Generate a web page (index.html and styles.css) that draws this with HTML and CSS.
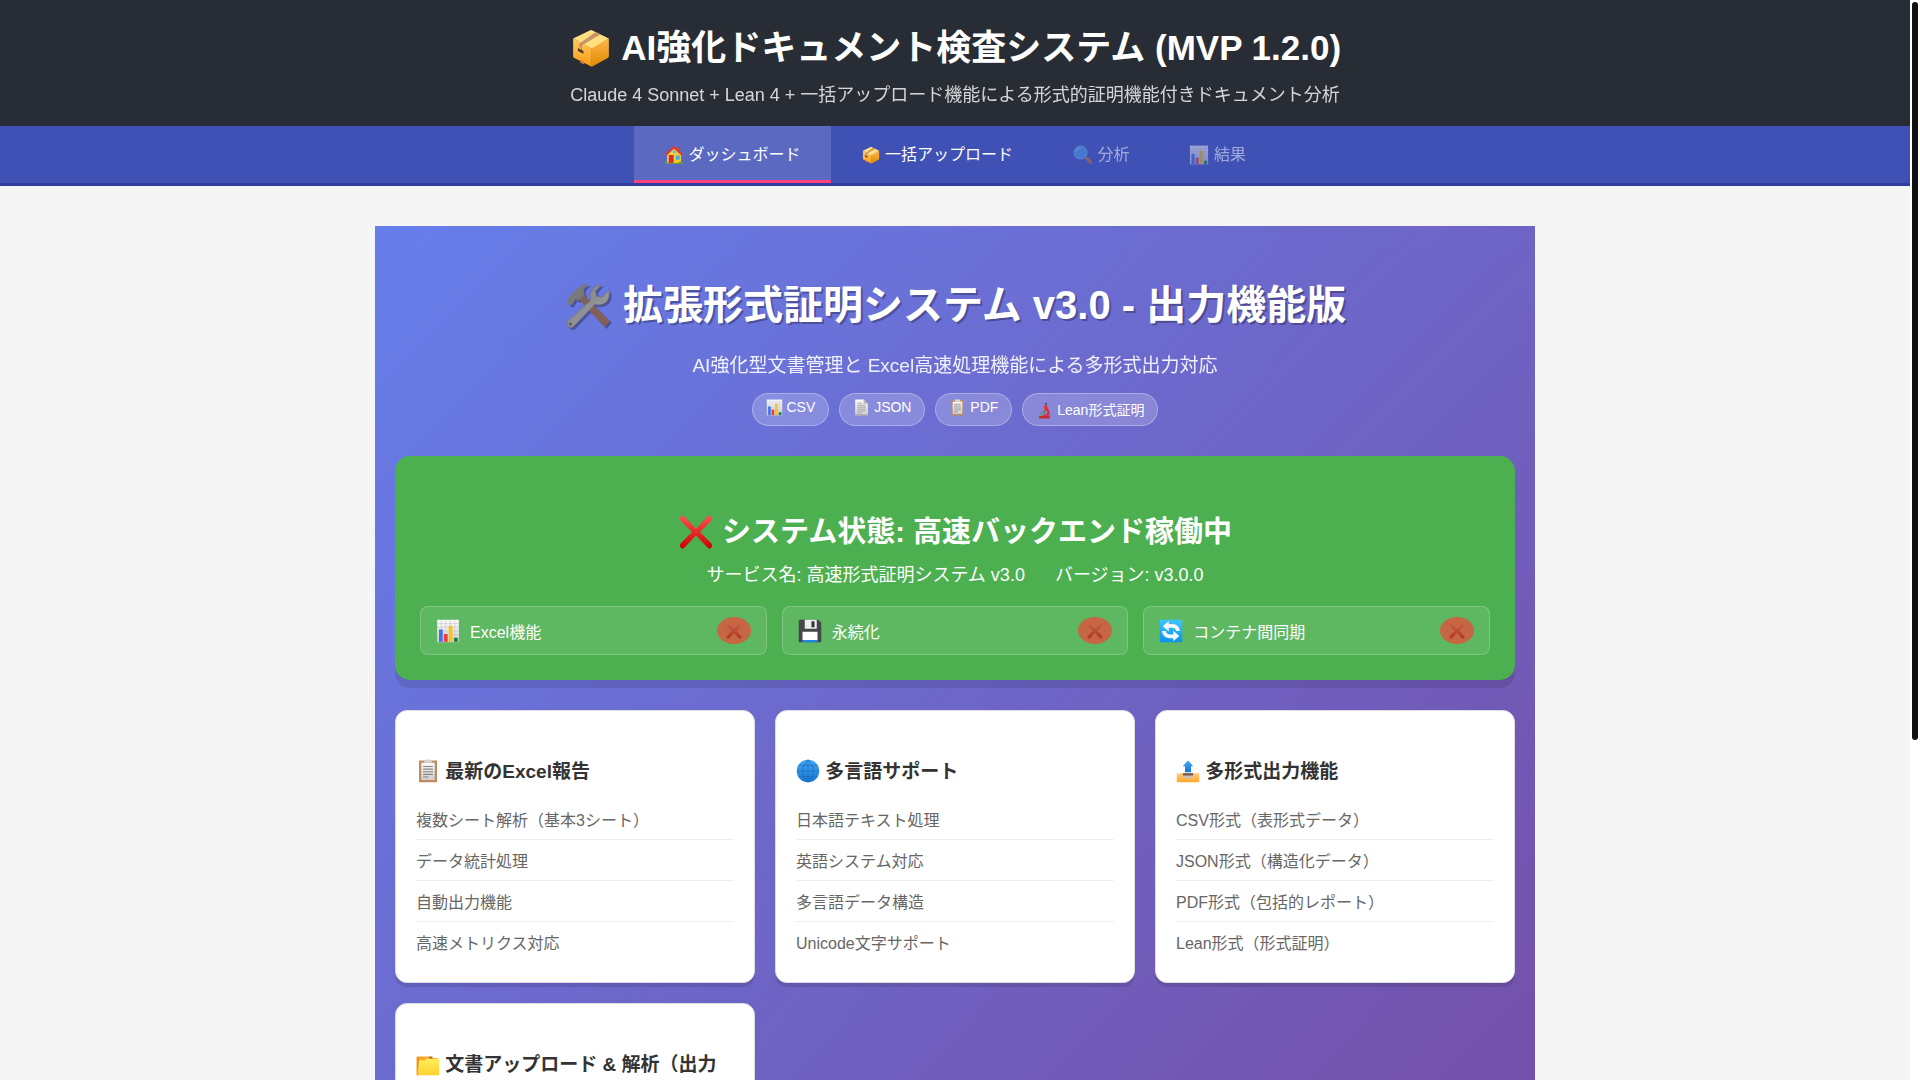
FILE: index.html
```html
<!DOCTYPE html>
<html lang="ja">
<head>
<meta charset="utf-8">
<title>AI強化ドキュメント検査システム</title>
<link rel="stylesheet" href="styles.css">
</head>
<body>
<svg class="sprite" aria-hidden="true">
  <defs>
    <linearGradient id="g-box-side" x1="0" y1="0" x2="0" y2="1"><stop offset="0" stop-color="#ffb74d"/><stop offset="1" stop-color="#e08a00"/></linearGradient>
    <linearGradient id="g-box-front" x1="0" y1="0" x2="0" y2="1"><stop offset="0" stop-color="#ffca5c"/><stop offset="1" stop-color="#fb9a17"/></linearGradient>
    <linearGradient id="g-metal" x1="0" y1="0" x2="1" y2="1"><stop offset="0" stop-color="#7c7c80"/><stop offset="1" stop-color="#a5a5a5"/></linearGradient>
    <linearGradient id="g-paper" x1="0" y1="0" x2="0" y2="1"><stop offset="0" stop-color="#fafafa"/><stop offset="1" stop-color="#cfcfcf"/></linearGradient>
    <linearGradient id="g-red" x1="0" y1="0" x2="0" y2="1"><stop offset="0" stop-color="#ff5252"/><stop offset="1" stop-color="#d00000"/></linearGradient>
    <linearGradient id="g-red-dim" x1="0" y1="0" x2="0" y2="1"><stop offset="0" stop-color="#c65f49"/><stop offset="1" stop-color="#aa3920"/></linearGradient>
    <linearGradient id="g-blue" x1="0" y1="0" x2="0" y2="1"><stop offset="0" stop-color="#42a5f5"/><stop offset="1" stop-color="#1976d2"/></linearGradient>
    <linearGradient id="g-cyan" x1="0" y1="0" x2="0" y2="1"><stop offset="0" stop-color="#40c4ff"/><stop offset="1" stop-color="#0a93ea"/></linearGradient>
    <linearGradient id="g-folder" x1="0" y1="0" x2="0" y2="1"><stop offset="0" stop-color="#ffee58"/><stop offset="1" stop-color="#fdd131"/></linearGradient>
    <linearGradient id="g-tray" x1="0" y1="0" x2="0" y2="1"><stop offset="0" stop-color="#ffcc80"/><stop offset="1" stop-color="#ffa82b"/></linearGradient>
  </defs>
  <symbol id="package" viewBox="0 0 32 32">
    <path d="M3 9 16.500 16 16.500 29.500Q16 29.500 15.500 29L3.500 23Q3 22.500 3 22z" fill="url(#g-box-front)"/>
    <path d="M29 9v13q0 .6-.5 1L17 29.500h-.8V16z" fill="url(#g-box-side)"/>
    <path d="M3 9 15.500 3q.6-.2 1.200 0L29 9 16.500 16.300z" fill="#ffdf7e"/>
    <path d="M19.500 4.300 23 6 9.500 14v3.500L7.500 15v-2.200z" fill="#c8936c"/>
    <path d="m6.500 16 4 2.200v2l-4-2z" fill="#4e342e"/><path d="M8 24.500l3 1.500v2l-3-1.500z" fill="#c77d3a"/>
  </symbol>
  <symbol id="house" viewBox="0 0 32 32">
    <path d="M5 14 16 4l11 10v15H5z" fill="#fdd835"/><path d="M16 4l11 10v15h-9z" fill="#ffc928"/>
    <path d="M22 3h3.500v8L22 8z" fill="#d84315"/>
    <path d="M16 1 2 14.500 4 17 16 6l12 11 2-2.500z" fill="#e53935"/>
    <path d="M7.500 16h8v13h-8z" fill="#d32f2f"/><path d="M19 17h6v6.500h-6z" fill="#29b6f6"/><circle cx="16" cy="11" r="2.500" fill="#4fc3f7"/>
    <path d="M1.500 28.500q2-4 5 0t6 0h11q3-4 7 0V30.500h-29z" fill="#689f38"/>
  </symbol>
  <symbol id="search" viewBox="0 0 32 32">
    <path d="m20 20 3-1.500 7 7.500q1 2-.5 3.500-2 1-3.500 0L19.500 22z" fill="#d86b1f"/>
    <circle cx="12" cy="12" r="10.500" fill="#4fa0ee" stroke="#80b4df" stroke-width="1.500"/><path d="M5 11q1-6 7-6.500" fill="none" stroke="#b3d9fa" stroke-width="1.500"/>
  </symbol>
  <symbol id="chart" viewBox="0 0 32 32">
    <path d="M1.500 1h29v30h-29z" fill="url(#g-paper)"/>
    <path d="M1.500 6h29M1.500 11h29M1.500 16h29M1.500 21h29M1.500 26h29M7 1v30M13 1v30M19 1v30M25 1v30" stroke="#c4c4c4" stroke-width=".7"/>
    <path d="M4 14h5v16.500H4z" fill="#3f75e8"/><path d="M10.500 20h5v10.500h-5z" fill="#ee4036"/><path d="M17 9h5v21.500h-5z" fill="#fbc31d"/><path d="M24 25h5v5.500h-5z" fill="#108643"/>
  </symbol>
  <symbol id="tools" viewBox="0 0 32 32">
    <path d="m9.500 11 3.500-2.500L30.500 26l-3.500 4z" fill="#806057"/>
    <path d="M2.500 11 8 5q4-4 9-3.500-4 2-4 5l1 2-4.500 4-2-1-1 2-2 2.500L2 14z" fill="#78787d"/>
    <path d="M2.500 26 18 12q-1.500-5 2-8.500 2-1.700 5-1.700l-4 4.200.8 3.500 3.500.8 4.500-4.800q1.300 5-1.800 8-3 2.500-7.500 1.500L6 30q-2 1-3.500-.5-1.300-1.700 0-3.500z" fill="url(#g-metal)" stroke="#707072" stroke-width=".4"/>
    <circle cx="4.300" cy="28" r="1" fill="#585860"/>
  </symbol>
  <symbol id="page" viewBox="0 0 32 32">
    <path d="M4 1h16l8 8v22H4z" fill="url(#g-paper)"/><path d="M20 1v8h8z" fill="#b5b5b5"/>
    <path d="M8 8h9M8 12h16M8 15.500h16M8 19h16M8 22.500h16M8 26h8" stroke="#929292" stroke-width="1.400"/><path d="M4 29h24v2H4z" fill="#9e9e9e"/>
  </symbol>
  <symbol id="clipboard" viewBox="0 0 32 32">
    <path d="M4 2h24v29H4z" fill="#bd8c62"/><path d="M7 5h18v23H7z" fill="url(#g-paper)"/>
    <path d="M11 1h3q2-1.500 4 0h3v4H11z" fill="#d5d5d5"/>
    <path d="M9.500 10h13M9.500 13.500h13M9.500 17h13M9.500 20.500h13M9.500 24h7" stroke="#858585" stroke-width="1.400"/>
  </symbol>
  <symbol id="microscope" viewBox="0 0 32 32">
    <path d="M16.500 2 20 1l1 4-3 1z" fill="#455a64"/><path d="M14 8l6-3 2 6 2 4q3 5 1 11H9v-3h12q1-5-2-8z" fill="#d32f2f"/>
    <path d="M15 9l4-1 2 7-5 4z" fill="#e53935"/><path d="m7 21 9-5 2 4-10 4z" fill="#607d8b"/><circle cx="10" cy="23" r="4" fill="#78909c"/>
    <path d="M6 26.500h20V31H6z" fill="#c62828"/>
  </symbol>
  <symbol id="cross" viewBox="0 0 32 32">
    <path d="M2.500 2.200q1.800-1.700 3.500.3L16 13 26 2.500q1.700-2 3.500-.3 1.700 1.700.2 3.700L19.500 16l10.200 10.300q1.500 1.800-.2 3.600-1.800 1.700-3.500-.3L16 19 6 29.600q-1.700 2-3.500.3-1.700-1.800-.2-3.600L12.500 16 2.300 5.900q-1.500-2 .2-3.700z"/>
  </symbol>
  <symbol id="floppy" viewBox="0 0 32 32">
    <path d="M3 1h24l4 4v25q0 1-1 1H2q-1 0-1-1V3q0-2 2-2z" fill="#46474a"/>
    <path d="M9 1h16v12H9z" fill="#eee"/><path d="M18 3h4v8h-4z" fill="#333"/>
    <path d="M6 17h20v11H6z" fill="#fff"/><path d="M6 28h20v3H6z" fill="#1e88e5"/>
  </symbol>
  <symbol id="sync" viewBox="0 0 32 32">
    <path d="M1 1h30v30H1z" fill="url(#g-cyan)"/>
    <path d="M5 9.500 13 2.500v4h5q9 .5 10 9.500h-5q-1-4.500-6-4.500h-4v5z" fill="#f3f7fa"/>
    <path d="M27 22.500 19 29.500v-4h-5Q5 25 4 16h5q1 4.500 6 4.500h4v-5z" fill="#f3f7fa"/>
  </symbol>
  <symbol id="globe" viewBox="0 0 32 32">
    <circle cx="16" cy="16" r="15" fill="url(#g-blue)"/>
    <path d="M1.500 16h29M3.500 8.500h25M3.500 23.500h25M16 1v30" stroke="#1768b8" stroke-width=".8"/><path d="M16 1Q1 16 16 31Q31 16 16 1" fill="none" stroke="#1768b8" stroke-width=".9"/>
  </symbol>
  <symbol id="outbox" viewBox="0 0 32 32">
    <path d="M1 19h30v11q0 1-1 1H2q-1 0-1-1z" fill="url(#g-tray)"/><path d="M9 19h14q0 7-7 7t-7-7z" fill="#c6c1bd"/><path d="M9 19h14l-.5 3h-13z" fill="#795548"/>
    <path d="m16 2 7 7.500H20v8h-8v-8H9z" fill="url(#g-blue)"/>
  </symbol>
  <symbol id="folder" viewBox="0 0 32 32">
    <path d="M1 6h16l2 2h10v6H3v17H1z" fill="#f9a825"/><path d="M17 6h5v3h-4z" fill="#a66b35"/>
    <path d="M1 7h3v24H1z" fill="#e69512"/><path d="M4 11h8l2-2h16q1 0 1 1v21H2z" fill="url(#g-folder)"/>
  </symbol>
</svg>
<header class="site-header">
  <h1><svg class="icon icon-title"><use href="#package"/></svg> AI強化ドキュメント検査システム (MVP 1.2.0)</h1>
  <p>Claude 4 Sonnet + Lean 4 + 一括アップロード機能による形式的証明機能付きドキュメント分析</p>
</header>
<nav class="tabs">
  <button class="tab tab-active"><svg class="icon"><use href="#house"/></svg> ダッシュボード</button>
  <button class="tab"><svg class="icon"><use href="#package"/></svg> 一括アップロード</button>
  <button class="tab" disabled><svg class="icon"><use href="#search"/></svg> 分析</button>
  <button class="tab" disabled><svg class="icon"><use href="#chart"/></svg> 結果</button>
</nav>
<main class="dashboard">
  <section class="hero">
    <h2><svg class="icon icon-hero"><use href="#tools"/></svg> 拡張形式証明システム v3.0 - 出力機能版</h2>
    <p>AI強化型文書管理と Excel高速処理機能による多形式出力対応</p>
    <div class="badges">
      <span class="badge"><svg class="icon icon-small"><use href="#chart"/></svg> CSV</span>
      <span class="badge"><svg class="icon icon-small"><use href="#page"/></svg> JSON</span>
      <span class="badge"><svg class="icon icon-small"><use href="#clipboard"/></svg> PDF</span>
      <span class="badge"><svg class="icon icon-small"><use href="#microscope"/></svg> Lean形式証明</span>
    </div>
  </section>
  <section class="status">
    <h3><svg class="icon icon-status"><use href="#cross"/></svg> システム状態: 高速バックエンド稼働中</h3>
    <div class="status-info"><span>サービス名: 高速形式証明システム v3.0</span><span>バージョン: v3.0.0</span></div>
    <div class="features">
      <div class="feature"><svg class="icon icon-card"><use href="#chart"/></svg><span>Excel機能</span><span class="feature-state"><svg class="icon-state"><use href="#cross"/></svg></span></div>
      <div class="feature"><svg class="icon icon-card"><use href="#floppy"/></svg><span>永続化</span><span class="feature-state"><svg class="icon-state"><use href="#cross"/></svg></span></div>
      <div class="feature"><svg class="icon icon-card"><use href="#sync"/></svg><span>コンテナ間同期</span><span class="feature-state"><svg class="icon-state"><use href="#cross"/></svg></span></div>
    </div>
  </section>
  <section class="cards">
    <article class="card">
      <h4><svg class="icon icon-card"><use href="#clipboard"/></svg> 最新のExcel報告</h4>
      <ul><li>複数シート解析（基本3シート）</li><li>データ統計処理</li><li>自動出力機能</li><li>高速メトリクス対応</li></ul>
    </article>
    <article class="card">
      <h4><svg class="icon icon-card"><use href="#globe"/></svg> 多言語サポート</h4>
      <ul><li>日本語テキスト処理</li><li>英語システム対応</li><li>多言語データ構造</li><li>Unicode文字サポート</li></ul>
    </article>
    <article class="card">
      <h4><svg class="icon icon-card"><use href="#outbox"/></svg> 多形式出力機能</h4>
      <ul><li>CSV形式（表形式データ）</li><li>JSON形式（構造化データ）</li><li>PDF形式（包括的レポート）</li><li>Lean形式（形式証明）</li></ul>
    </article>
    <article class="card">
      <h4><svg class="icon icon-card"><use href="#folder"/></svg> 文書アップロード &amp; 解析（出力</h4>
    </article>
  </section>
</main>
<div class="scrollbar" aria-hidden="true"><div class="scrollbar-thumb"></div></div>
</body>
</html>
```
FILE: styles.css
```css
* { box-sizing: border-box; }
body {
  margin: 0;
  padding-right: 10px;
  background: #f5f5f5;
  font-family: "Liberation Sans", "Noto Sans CJK JP", sans-serif;
  font-size: 16px;
  color: #333;
}
.sprite { display: block; width: 0; height: 0; }

/* Icons are sized to sit in the text like an emoji */
.icon { width: 20px; height: 20px; vertical-align: -5px; }
.icon-small { width: 17px; height: 17px; vertical-align: -4px; }
.icon-card { width: 24px; height: 24px; vertical-align: -5px; flex: none; }
.icon-status { width: 36px; height: 36px; vertical-align: -8px; fill: url(#g-red); }
.icon-title { width: 44px; height: 44px; vertical-align: -10px; }
.icon-hero { width: 48px; height: 48px; vertical-align: -11px; filter: drop-shadow(2px 2px 0 rgba(0, 0, 0, .3)); }
.icon-state { display: block; width: 16px; height: 16px; fill: url(#g-red-dim); stroke: url(#g-red-dim); stroke-width: 2px; overflow: visible; }

.site-header { background: #282c34; color: #fff; text-align: center; padding: 20px; }
.site-header h1 { margin: 0; font-size: 35px; line-height: 56px; }
.site-header p { margin: 8px 0 0; font-size: 18px; line-height: 22px; opacity: .8; }

.tabs { display: flex; justify-content: center; background: #3f51b5; border-bottom: 3px solid #303f9f; }
.tab {
  border: 0;
  border-bottom: 3px solid transparent;
  background: none;
  color: #fff;
  font-family: inherit;
  font-size: 16px;
  line-height: 24px;
  padding: 17px 30px 13px;
  white-space: nowrap;
}
.tab-active { background: rgba(255, 255, 255, .15); border-bottom-color: #ff4081; }
.tab:disabled { opacity: .5; }

.dashboard {
  max-width: 1160px;
  margin: 40px auto;
  padding: 20px 20px 200px;
  background: linear-gradient(135deg, #667eea, #764ba2);
}
.hero { text-align: center; color: #fff; padding: 30px 0; }
.hero h2 { margin: 0; font-size: 40px; line-height: 58px; text-shadow: 2px 2px 0 rgba(0, 0, 0, .3); }
.hero p { margin: 19px 0 14px; font-size: 19px; line-height: 26px; opacity: .9; }
.badges { display: flex; justify-content: center; gap: 10px; }
.badge {
  font-size: 14px;
  padding: 5px 13px 6px;
  border: 1px solid rgba(255, 255, 255, .3);
  border-radius: 20px;
  background: rgba(255, 255, 255, .2);
}

.status {
  background: #4caf50;
  color: #fff;
  border-radius: 15px;
  padding: 25px;
  text-align: center;
  box-shadow: 0 8px 0 rgba(0, 0, 0, .1);
}
.status h3 { margin: 28px 0 8px; font-size: 29px; line-height: 46px; }
.status-info { display: flex; justify-content: center; gap: 30px; font-size: 18px; line-height: 24px; }
.features { display: grid; grid-template-columns: repeat(3, 1fr); gap: 15px; margin-top: 19px; }
.feature {
  display: flex;
  align-items: center;
  gap: 10px;
  padding: 10px 15px;
  border: 1px solid rgba(255, 255, 255, .2);
  border-radius: 8px;
  background: rgba(255, 255, 255, .1);
}
.feature-state {
  display: flex;
  align-items: center;
  justify-content: center;
  width: 34px;
  height: 27px;
  margin-left: auto;
  border-radius: 50%;
  background: rgba(244, 67, 54, .7);
}

.cards { display: grid; grid-template-columns: repeat(3, 1fr); gap: 20px; margin-top: 30px; }
.card {
  background: #fff;
  border: 1px solid #ddd;
  border-radius: 12px;
  padding: 20px;
  box-shadow: 0 4px 0 rgba(0, 0, 0, .1);
}
.card h4 { margin: 27px 0 13px; font-size: 19px; line-height: 28px; }
.card ul { margin: 0; padding: 0; list-style: none; }
.card li { padding: 10px 0 6px; border-bottom: 1px solid #eee; line-height: 24px; color: #666; }
.card li:last-child { border-bottom: 0; }

/* Page scroll indicator, pinned to the right edge of the window */
.scrollbar { position: fixed; top: 0; right: 0; bottom: 0; width: 10px; padding: 2px; background: #fff; }
.scrollbar-thumb { height: 738px; border-radius: 3px; background: #111; }
```
